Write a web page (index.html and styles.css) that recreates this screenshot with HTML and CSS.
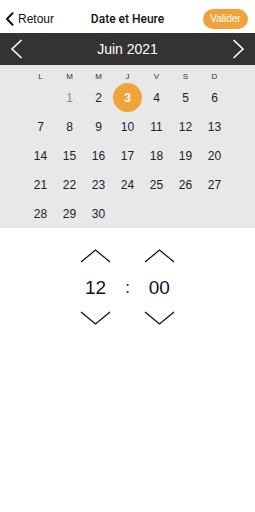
FILE: index.html
```html
<!DOCTYPE html>
<html lang="fr">
<head>
    <meta charset="UTF-8">
    <meta name="viewport" content="width=device-width, initial-scale=1.0">
    <title>Date et Heure</title>
    <link rel="stylesheet" href="styles.css">
</head>
<body>
    <div class="header">
        <a class="back" href="#">
            <svg width="9" height="14" viewBox="0 0 9 14"><path d="M7.5 1.2 L2 7 L7.5 12.8" fill="none" stroke="#111" stroke-width="2" stroke-linecap="round" stroke-linejoin="round"/></svg>
            <span>Retour</span>
        </a>
        <span class="title">Date et Heure</span>
        <button class="btn">Valider</button>
    </div>

    <div class="month-bar">
        <svg width="13" height="20" viewBox="0 0 13 20"><path d="M11.5 1 L2 10 L11.5 19" fill="none" stroke="#fff" stroke-width="1.6"/></svg>
        <span class="month">Juin 2021</span>
        <svg width="13" height="20" viewBox="0 0 13 20"><path d="M1.5 1 L11 10 L1.5 19" fill="none" stroke="#fff" stroke-width="1.6"/></svg>
    </div>

    <div class="calendar">
        <div class="weekdays">
            <span>L</span><span>M</span><span>M</span><span>J</span><span>V</span><span>S</span><span>D</span>
        </div>
        <div class="days">
            <span></span>
            <span class="past">1</span>
            <span>2</span>
            <span class="selected">3</span>
            <span>4</span><span>5</span><span>6</span>
            <span>7</span><span>8</span><span>9</span><span>10</span><span>11</span><span>12</span><span>13</span>
            <span>14</span><span>15</span><span>16</span><span>17</span><span>18</span><span>19</span><span>20</span>
            <span>21</span><span>22</span><span>23</span><span>24</span><span>25</span><span>26</span><span>27</span>
            <span>28</span><span>29</span><span>30</span>
        </div>
    </div>

    <div class="time">
        <div class="time-col">
            <svg class="arrow" width="31" height="14" viewBox="0 0 31 14"><path d="M1 13 L15.5 1 L30 13" fill="none" stroke="#111" stroke-width="1.3"/></svg>
            <span class="value">12</span>
            <svg class="arrow" width="31" height="14" viewBox="0 0 31 14"><path d="M1 1 L15.5 13 L30 1" fill="none" stroke="#111" stroke-width="1.3"/></svg>
        </div>
        <span class="sep">:</span>
        <div class="time-col">
            <svg class="arrow" width="31" height="14" viewBox="0 0 31 14"><path d="M1 13 L15.5 1 L30 13" fill="none" stroke="#111" stroke-width="1.3"/></svg>
            <span class="value">00</span>
            <svg class="arrow" width="31" height="14" viewBox="0 0 31 14"><path d="M1 1 L15.5 13 L30 1" fill="none" stroke="#111" stroke-width="1.3"/></svg>
        </div>
    </div>
</body>
</html>
```

FILE: styles.css
```css
body {
    font-family: "Liberation Sans", Arial, sans-serif;
    background: white;
    margin: 0;
    color: #111;
}
.header {
    height: 29px;
    display: flex;
    align-items: center;
    justify-content: space-between;
    padding: 4px 7px 0 5px;
    position: relative;
}
.back {
    display: flex;
    align-items: center;
    gap: 4px;
    color: #111;
    text-decoration: none;
    font-size: 12px;
}
.back svg {
    margin-top: 1px;
}
.title {
    position: absolute;
    left: 0;
    right: 0;
    text-align: center;
    font-family: Roboto, sans-serif;
    font-size: 12px;
    font-weight: 500;
    pointer-events: none;
}
.btn {
    background: #f0a33a;
    color: white;
    border: none;
    border-radius: 10px;
    height: 20px;
    width: 45px;
    font-family: inherit;
    font-size: 10px;
    padding: 0;
}
.month-bar {
    height: 32px;
    background: #333;
    display: flex;
    align-items: center;
    justify-content: space-between;
    padding: 0 10px;
}
.month {
    color: white;
    font-size: 14px;
}
.calendar {
    background: #e8e8e8;
    padding: 6px 0 0;
}
.weekdays,
.days {
    display: grid;
    grid-template-columns: repeat(7, 29px);
    justify-content: center;
}
.weekdays span {
    height: 12px;
    line-height: 12px;
    text-align: center;
    font-size: 8px;
    color: #333;
}
.days span {
    height: 29px;
    display: flex;
    align-items: center;
    justify-content: center;
    font-size: 12px;
    color: #222;
}
.days .past {
    color: #8a8a8a;
}
.days .selected {
    background: #f0a33a;
    color: white;
    border-radius: 50%;
    font-weight: 700;
}
.time {
    display: flex;
    justify-content: center;
    align-items: center;
    gap: 14px;
    padding-top: 21px;
}
.time-col {
    display: flex;
    flex-direction: column;
    align-items: center;
    gap: 12px;
}
.value {
    font-size: 19px;
    line-height: 22px;
    margin-top: 2px;
}
.sep {
    font-size: 17px;
    margin-top: 1px;
}
```
